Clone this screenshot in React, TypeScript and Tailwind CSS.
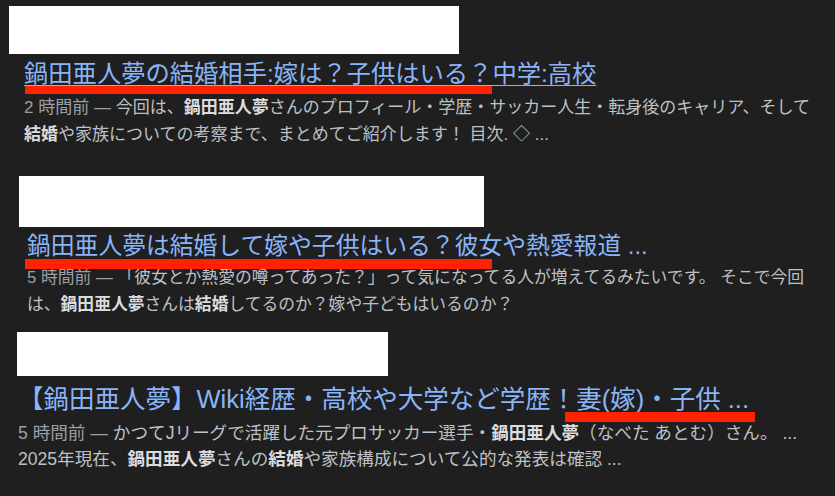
import React from 'react';

type Part = { t: string; b?: boolean; br?: boolean };

interface ResultProps {
  boxClass: string;
  titleClass: string;
  titleSize: string;
  title: string;
  underline?: boolean;
  markClass: string;
  time: string;
  snippet: Part[];
  snippetClass: string;
  wrapClass: string;
}

const Result: React.FC<ResultProps> = ({ boxClass, titleClass, titleSize, title, underline, markClass, time, snippet, snippetClass, wrapClass }) => (
  <div className={wrapClass}>
    <div className={`bg-white ${boxClass}`} />
    <div className={`relative ${titleClass}`}>
      <h3
        className={`leading-[30px] text-[#8ab4f8] whitespace-nowrap ${titleSize} ${
          underline ? 'underline decoration-1 underline-offset-[3px]' : ''
        }`}
      >
        {title}
      </h3>
      {/* red annotation mark */}
      <div className={`absolute bg-[#ff2200] ${markClass}`} />
    </div>
    <p className={`text-[#bdc1c6] whitespace-nowrap ${snippetClass}`}>
      <span className="text-[#9aa0a6]">{time} — </span>
      {snippet.map((p, i) =>
        p.br ? (
          <br key={i} />
        ) : p.b ? (
          <b key={i} className="font-bold text-[#dadce0]">
            {p.t}
          </b>
        ) : (
          <span key={i}>{p.t}</span>
        )
      )}
    </p>
  </div>
);

export default function App() {
  return (
    <div
      className="w-[835px] h-[496px] overflow-hidden bg-[#1f1f1f]"
      style={{ fontFamily: '"Liberation Sans", "Noto Sans CJK JP", sans-serif' }}
    >
      <Result
        wrapClass="pt-[6px]"
        boxClass="ml-[9px] w-[450px] h-[48px]"
        titleClass="mt-[5px] ml-[24px]"
        titleSize="text-[24.3px]"
        title="鍋田亜人夢の結婚相手:嫁は？子供はいる？中学:高校"
        underline
        markClass="top-[27px] left-[1px] w-[467px] h-[8px]"
        time="2 時間前"
        snippet={[
          { t: '今回は、' },
          { t: '鍋田亜人夢', b: true },
          { t: 'さんのプロフィール・学歴・サッカー人生・転身後のキャリア、そして' },
          { t: '', br: true },
          { t: '結婚', b: true },
          { t: 'や家族についての考察まで、まとめてご紹介します！ 目次. ◇ ...' },
        ]}
        snippetClass="mt-[5px] ml-[24px] text-[17px] leading-[27px]"
      />
      <Result
        wrapClass="mt-[28px]"
        boxClass="ml-[19px] w-[465px] h-[51px]"
        titleClass="mt-[4px] ml-[27px]"
        titleSize="text-[23.8px]"
        title="鍋田亜人夢は結婚して嫁や子供はいる？彼女や熱愛報道 ..."
        markClass="top-[28px] -left-[2px] w-[467px] h-[10px]"
        time="5 時間前"
        snippet={[
          { t: '「彼女とか熱愛の噂ってあった？」って気になってる人が増えてるみたいです。 そこで今回' },
          { t: '', br: true },
          { t: 'は、' },
          { t: '鍋田亜人夢', b: true },
          { t: 'さんは' },
          { t: '結婚', b: true },
          { t: 'してるのか？嫁や子どもはいるのか？' },
        ]}
        snippetClass="mt-[3px] ml-[27px] text-[16.8px] leading-[27px]"
      />
      <Result
        wrapClass="mt-[14px]"
        boxClass="ml-[17px] w-[371px] h-[44px]"
        titleClass="mt-[8px] ml-[18px]"
        titleSize="text-[25.5px]"
        title="【鍋田亜人夢】Wiki経歴・高校や大学など学歴！妻(嫁)・子供 ..."
        markClass="top-[28px] left-[547px] w-[190px] h-[10px]"
        time="5 時間前"
        snippet={[
          { t: 'かつてJリーグで活躍した元プロサッカー選手・' },
          { t: '鍋田亜人夢', b: true },
          { t: '（なべた あとむ）さん。 ...' },
          { t: '', br: true },
          { t: '2025年現在、' },
          { t: '鍋田亜人夢', b: true },
          { t: 'さんの' },
          { t: '結婚', b: true },
          { t: 'や家族構成について公的な発表は確認 ...' },
        ]}
        snippetClass="mt-[6px] ml-[18px] text-[17.6px] leading-[26px]"
      />
    </div>
  );
}
